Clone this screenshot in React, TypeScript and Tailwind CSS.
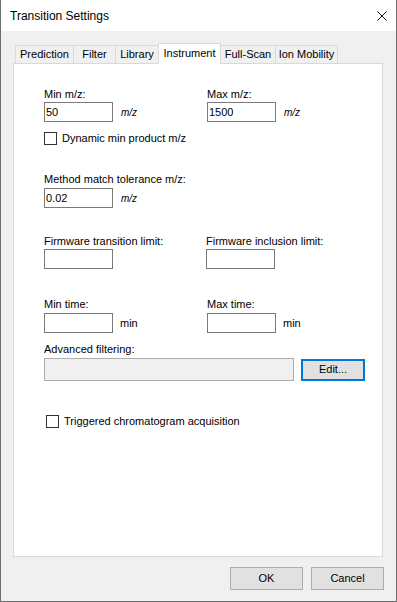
import React from 'react';

const tabs = [
  { name: 'Prediction', cls: 'w-[58px] h-[18px] border-l border-t bg-[#f0f0f0]' },
  { name: 'Filter', cls: 'w-[42px] h-[18px] border-l border-t bg-[#f0f0f0]' },
  { name: 'Library', cls: 'w-[43px] h-[18px] border-l border-t bg-[#f0f0f0]' },
  { name: 'Instrument', cls: 'w-[63px] h-[21px] -mb-px border-l border-t border-r bg-white relative z-10 pb-[2px]' },
  { name: 'Full-Scan', cls: 'w-[54px] h-[18px] border-t bg-[#f0f0f0]' },
  { name: 'Ion Mobility', cls: 'w-[63px] h-[18px] border-l border-t border-r bg-[#f0f0f0]' },
];

function TextBox({ value = '' }: { value?: string }) {
  return (
    <div className="w-[69px] h-[20px] border border-[#7a7a7a] bg-white pl-[1px] leading-[18px]">
      {value}
    </div>
  );
}

function Field({ label, value, unit, italic, labelGap }: { label: string; value?: string; unit?: string; italic?: boolean; labelGap: string }) {
  return (
    <div className="flex flex-col">
      <div className="h-[13px] leading-[13px]">{label}</div>
      <div className={labelGap + ' flex items-center'}>
        <TextBox value={value} />
        {unit && (
          <span className={italic ? 'ml-[8px] italic text-[10px]' : 'ml-[7px]'}>{unit}</span>
        )}
      </div>
    </div>
  );
}

function CheckBox({ label, cls }: { label: string; cls: string }) {
  return (
    <div className={cls + ' flex items-center h-[13px]'}>
      <div className="w-[13px] h-[13px] border border-[#333333] bg-white" />
      <span className="ml-[5px] leading-[13px]">{label}</span>
    </div>
  );
}

export default function App() {
  return (
    <div className="w-[397px] h-[602px] flex flex-col bg-[#f0f0f0] border-l border-r border-b border-[#6f6f6f] text-[11px] text-black font-['Liberation_Sans',Arial,sans-serif]">
      {/* Title bar */}
      <div className="h-[31px] bg-white flex items-center justify-between pl-[9px] pr-[9px] shrink-0">
        <span className="text-[12px]">Transition Settings</span>
        <svg width="10" height="10" viewBox="0 0 10 10">
          <path d="M0.5 0.5 L9.5 9.5 M9.5 0.5 L0.5 9.5" stroke="#111" strokeWidth="1" fill="none" />
        </svg>
      </div>

      {/* Tabs */}
      <div className="ml-[12px] mt-[12px] h-[20px] flex items-end pl-[2px]">
        {tabs.map((t) => (
          <div key={t.name} className={t.cls + ' border-[#d9d9d9] flex items-center justify-center'}>
            {t.name}
          </div>
        ))}
      </div>

      {/* Panel */}
      <div className="ml-[12px] w-[370px] h-[494px] border border-[#d9d9d9] bg-white pl-[30px] pt-[24px] flex flex-col">
        <div className="flex">
          <div className="w-[163px]">
            <Field label="Min m/z:" value="50" unit="m/z" italic labelGap="mt-[1px]" />
          </div>
          <Field label="Max m/z:" value="1500" unit="m/z" italic labelGap="mt-[1px]" />
        </div>

        <CheckBox label="Dynamic min product m/z" cls="mt-[10px]" />

        <div className="mt-[28px]">
          <Field label="Method match tolerance m/z:" value="0.02" unit="m/z" italic labelGap="mt-[2px]" />
        </div>

        <div className="mt-[27px] flex">
          <div className="w-[162px]">
            <Field label="Firmware transition limit:" labelGap="mt-[1px]" />
          </div>
          <Field label="Firmware inclusion limit:" labelGap="mt-[1px]" />
        </div>

        <div className="mt-[29px] flex">
          <div className="w-[163px]">
            <Field label="Min time:" unit="min" labelGap="mt-[2px]" />
          </div>
          <Field label="Max time:" unit="min" labelGap="mt-[2px]" />
        </div>

        <div className="mt-[10px] h-[13px] leading-[13px]">Advanced filtering:</div>
        <div className="mt-[2px] flex items-center gap-[7px]">
          <div className="w-[250px] h-[23px] border border-[#adadad] bg-[#f0f0f0]" />
          <div className="w-[64px] h-[22px] border-2 border-[#0078d7] bg-[#e1e1e1] flex items-center justify-center">
            Edit...
          </div>
        </div>

        <CheckBox label="Triggered chromatogram acquisition" cls="mt-[34px] ml-[2px]" />
      </div>

      {/* Buttons */}
      <div className="mt-[10px] flex justify-end gap-[8px] pr-[12px]">
        <div className="w-[73px] h-[23px] border border-[#adadad] bg-[#e1e1e1] flex items-center justify-center">
          OK
        </div>
        <div className="w-[73px] h-[23px] border border-[#adadad] bg-[#e1e1e1] flex items-center justify-center">
          Cancel
        </div>
      </div>
    </div>
  );
}
